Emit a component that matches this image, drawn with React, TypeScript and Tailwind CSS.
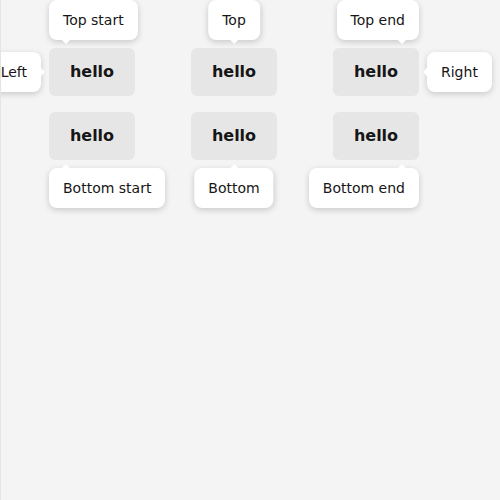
const font = { fontFamily: "'DejaVu Sans', sans-serif" };

type Side = "top-start" | "top" | "top-end" | "left" | "right" | "bottom-start" | "bottom" | "bottom-end";

const boxPos: Record<Side, string> = {
  "top-start": "bottom-full left-0 mb-2",
  top: "bottom-full left-1/2 -translate-x-1/2 mb-2",
  "top-end": "bottom-full right-0 mb-2",
  left: "right-full top-1/2 -translate-y-1/2 mr-2",
  right: "left-full top-1/2 -translate-y-1/2 ml-2",
  "bottom-start": "top-full left-0 mt-2",
  bottom: "top-full left-1/2 -translate-x-1/2 mt-2",
  "bottom-end": "top-full right-0 mt-2",
};

const arrowPos: Record<Side, string> = {
  "top-start": "top-full left-[13px]",
  top: "top-full left-1/2 -translate-x-1/2",
  "top-end": "top-full right-[13px]",
  left: "left-full top-1/2 -translate-y-1/2",
  right: "right-full top-1/2 -translate-y-1/2",
  "bottom-start": "bottom-full left-[13px]",
  bottom: "bottom-full left-1/2 -translate-x-1/2",
  "bottom-end": "bottom-full right-[13px]",
};

function Arrow({ side }: { side: Side }) {
  const dir = side.split("-")[0];
  const horiz = dir === "left" || dir === "right";
  const pts =
    dir === "top" ? "0,0 8,0 4,4" : dir === "bottom" ? "0,4 8,4 4,0" : dir === "left" ? "0,0 0,8 4,4" : "4,0 4,8 0,4";
  return (
    <svg
      className={`absolute ${arrowPos[side]}`}
      width={horiz ? 4 : 8}
      height={horiz ? 8 : 4}
      viewBox={horiz ? "0 0 4 8" : "0 0 8 4"}
    >
      <polygon points={pts} fill="#ffffff" />
    </svg>
  );
}

function Tip({ side, label }: { side: Side; label: string }) {
  return (
    <div
      className={`absolute ${boxPos[side]} z-10 h-10 px-[14px] flex items-center bg-white rounded-lg whitespace-nowrap text-sm font-normal text-[#161616] shadow-[0_2px_6px_rgba(0,0,0,0.18)]`}
    >
      {label}
      <Arrow side={side} />
    </div>
  );
}

function Hello({ tips }: { tips: [Side, string][] }) {
  return (
    <div className="relative w-[86px] h-12 rounded-md bg-[#e6e6e6] flex items-center justify-center text-base font-bold text-[#161616]">
      hello
      {tips.map(([s, l]) => (
        <Tip key={s} side={s} label={l} />
      ))}
    </div>
  );
}

export default function App() {
  return (
    <div style={font} className="w-[500px] h-[500px] overflow-hidden bg-[#f4f4f4] border-l border-[#e4e4e4]">
      <div className="pt-12 pl-[48px] flex flex-col gap-4">
        <div className="flex gap-14">
          <Hello tips={[["top-start", "Top start"], ["left", "Left"]]} />
          <Hello tips={[["top", "Top"]]} />
          <Hello tips={[["top-end", "Top end"], ["right", "Right"]]} />
        </div>
        <div className="flex gap-14">
          <Hello tips={[["bottom-start", "Bottom start"]]} />
          <Hello tips={[["bottom", "Bottom"]]} />
          <Hello tips={[["bottom-end", "Bottom end"]]} />
        </div>
      </div>
    </div>
  );
}
